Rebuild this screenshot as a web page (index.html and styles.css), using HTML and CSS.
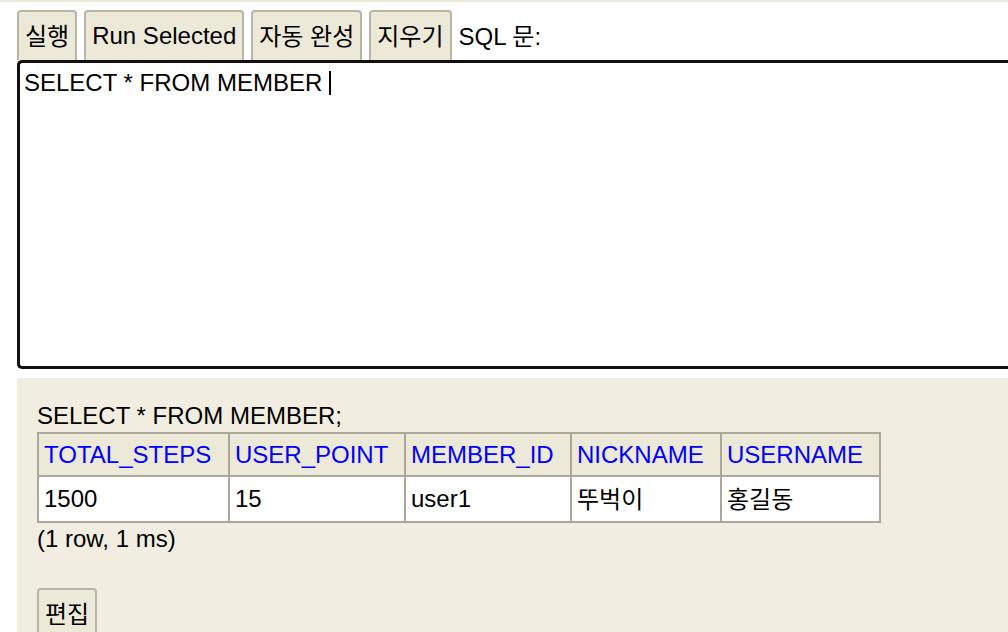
FILE: index.html
```html
<!DOCTYPE html>
<html lang="ko">
<head>
<meta charset="utf-8">
<title>H2 Console</title>
<link rel="stylesheet" href="styles.css">
</head>
<body>
<div class="topstrip"></div>
<div class="page">
  <div class="toolbar">
    <button class="btn"><span class="ko">실행</span></button>
    <button class="btn">Run Selected</button>
    <button class="btn"><span class="ko">자동</span> <span class="ko">완성</span></button>
    <button class="btn"><span class="ko">지우기</span></button>
    <span class="label">SQL <span class="ko">문</span>:</span>
  </div>
  <div class="editor"><span class="sql">SELECT * FROM MEMBER </span><span class="caret"></span></div>
  <div class="results">
    <div class="stmt">SELECT * FROM MEMBER;</div>
    <table class="grid">
      <thead>
        <tr class="head">
          <th>TOTAL_STEPS</th>
          <th>USER_POINT</th>
          <th>MEMBER_ID</th>
          <th>NICKNAME</th>
          <th>USERNAME</th>
        </tr>
      </thead>
      <tbody>
        <tr class="row">
          <td>1500</td>
          <td>15</td>
          <td>user1</td>
          <td><span class="ko">뚜벅이</span></td>
          <td><span class="ko">홍길동</span></td>
        </tr>
      </tbody>
    </table>
    <div class="meta">(1 row, 1 ms)</div>
    <button class="btn btn-edit"><span class="ko">편집</span></button>
  </div>
</div>
</body>
</html>
```

FILE: styles.css
```css
html, body {
  margin: 0;
  padding: 0;
  background: #ffffff;
  height: 100%;
  overflow: hidden;
}
body {
  font-family: "Liberation Sans", Arial, "Noto Sans CJK KR", sans-serif;
  font-size: 24px;
  line-height: 28px;
  color: #000;
}
.ko {
  font-family: "Noto Sans CJK KR", sans-serif;
  font-size: 24px;
}
.topstrip {
  height: 2px;
  background: #ece9d8;
}
.page {
  padding: 8px 0 0 17px;
  display: flex;
  flex-direction: column;
}
.toolbar {
  display: flex;
  align-items: flex-start;
  gap: 7px;
  height: 50px;
}
.btn {
  font-family: "Liberation Sans", Arial, "Noto Sans CJK KR", sans-serif;
  font-size: 24px;
  line-height: 28px;
  color: #000;
  background: #ece9d8;
  border: 2px solid #b8b5a7;
  border-bottom: none;
  border-radius: 4px 4px 0 0;
  height: 50px;
  padding: 0 6px;
  margin: 0;
}
.label {
  line-height: 50px;
  height: 50px;
}
.editor {
  height: 297px;
  border: 3px solid #111;
  border-right: none;
  border-radius: 5px 0 0 5px;
  padding: 6px 0 0 4px;
  margin-right: -3px;
  white-space: pre;
  display: flex;
  align-items: flex-start;
}
.caret {
  width: 2px;
  height: 24px;
  margin-top: 2px;
  background: #000;
}
.results {
  margin-top: 9px;
  background: #f1eee1;
  padding: 24px 0 60px 20px;
  display: flex;
  flex-direction: column;
  align-items: flex-start;
}
.grid {
  margin-top: 2px;
  border-collapse: collapse;
  border: 2px solid #aca899;
}
.grid th, .grid td {
  border: 2px solid #aca899;
  padding: 0 5px;
  text-align: left;
  vertical-align: middle;
  font-weight: normal;
  white-space: nowrap;
  line-height: 28px;
}
.grid th {
  background: #ece9d8;
  color: #0000ff;
  height: 41px;
}
.grid td {
  background: #ffffff;
  height: 44px;
}
.grid th:nth-child(1) { width: 179px; }
.grid th:nth-child(2) { width: 164px; }
.grid th:nth-child(3) { width: 154px; }
.grid th:nth-child(4) { width: 138px; }
.grid th:nth-child(5) { width: 147px; }
.meta {
  margin-top: 2px;
}
.btn-edit {
  margin-top: 35px;
}
```
